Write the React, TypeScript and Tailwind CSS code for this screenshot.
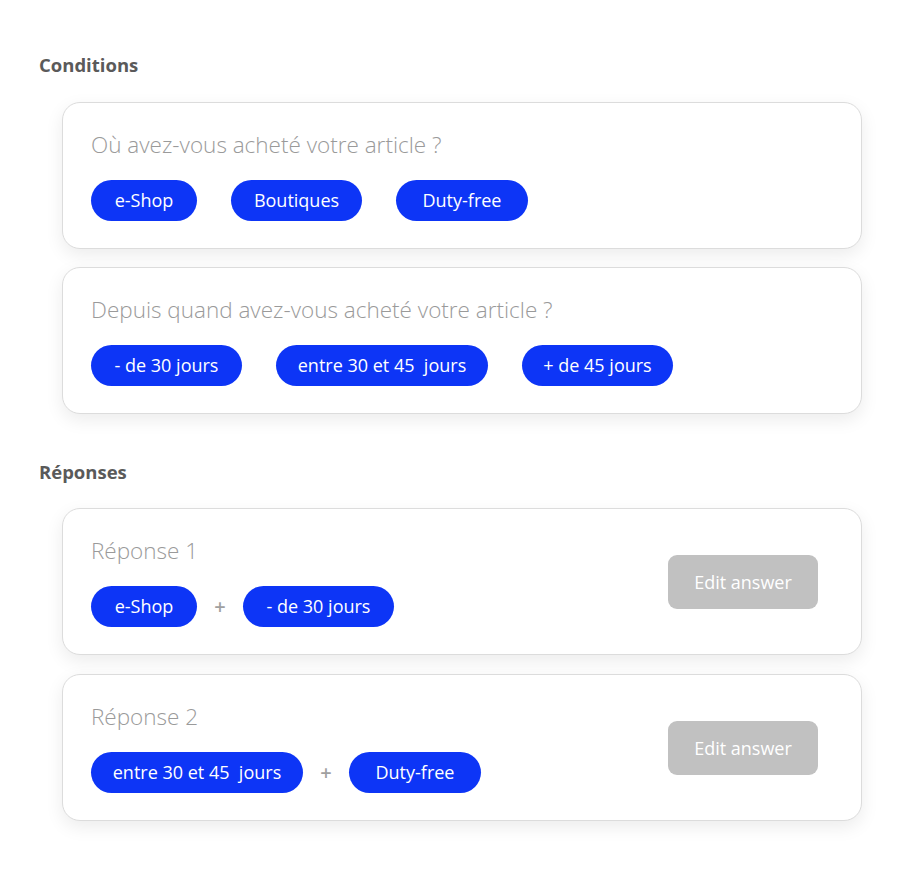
import React from 'react';

const font = { fontFamily: '"Open Sans", "Noto Sans", sans-serif' };

const pillWidth: Record<string, string> = {
  'e-Shop': 'w-[106px]',
  Boutiques: 'w-[131px]',
  'Duty-free': 'w-[132px]',
  '- de 30 jours': 'w-[151px]',
  'entre 30 et 45  jours': 'w-[212px]',
  '+ de 45 jours': 'w-[151px]',
};

function Pill({ label }: { label: string }) {
  return (
    <span
      className={`inline-flex h-[41px] items-center justify-center whitespace-pre rounded-full bg-[#0d35f6] text-[18px] font-medium text-white ${pillWidth[label]}`}
    >
      {label}
    </span>
  );
}

function Plus() {
  return <span className="w-[18px] text-center text-[20px] font-semibold text-[#a0a0a0]">+</span>;
}

function QuestionCard({ title, options }: { title: string; options: string[] }) {
  return (
    <div className="rounded-[18px] border border-[#dcdcdc] bg-white px-[28px] pt-[28px] pb-[27px] shadow-[0_6px_18px_rgba(0,0,0,0.08)]">
      <div className="h-[28px] text-[22.5px] font-light leading-[28px] text-[#9a9a9a]">{title}</div>
      <div className="mt-[21px] flex items-center gap-[34px]">
        {options.map((o) => (
          <Pill key={o} label={o} />
        ))}
      </div>
    </div>
  );
}

function AnswerCard({ title, parts }: { title: string; parts: string[] }) {
  return (
    <div className="flex items-center justify-between rounded-[18px] border border-[#dcdcdc] bg-white pl-[28px] pr-[43px] pt-[28px] pb-[27px] shadow-[0_6px_18px_rgba(0,0,0,0.08)]">
      <div>
        <div className="h-[28px] text-[22.5px] font-light leading-[28px] text-[#9a9a9a]">{title}</div>
        <div className="mt-[21px] flex items-center gap-[14px]">
          <Pill label={parts[0]} />
          <Plus />
          <Pill label={parts[1]} />
        </div>
      </div>
      <button className="h-[54px] w-[150px] rounded-[9px] bg-[#c1c1c1] text-[18px] text-white">Edit answer</button>
    </div>
  );
}

export default function App() {
  return (
    <div className="min-h-screen bg-white pl-[39px] pr-[38px] pt-[53px]" style={font}>
      <h2 className="h-[24px] text-[18.5px] font-bold leading-[24px] text-[#5a5a5a]">Conditions</h2>
      <div className="ml-[23px] mt-[25px] flex flex-col gap-[18px]">
        <QuestionCard title="Où avez-vous acheté votre article ?" options={['e-Shop', 'Boutiques', 'Duty-free']} />
        <QuestionCard
          title="Depuis quand avez-vous acheté votre article ?"
          options={['- de 30 jours', 'entre 30 et 45  jours', '+ de 45 jours']}
        />
      </div>
      <h2 className="mt-[46px] h-[24px] text-[18.5px] font-bold leading-[24px] text-[#5a5a5a]">Réponses</h2>
      <div className="ml-[23px] mt-[24px] flex flex-col gap-[19px]">
        <AnswerCard title="Réponse 1" parts={['e-Shop', '- de 30 jours']} />
        <AnswerCard title="Réponse 2" parts={['entre 30 et 45  jours', 'Duty-free']} />
      </div>
    </div>
  );
}
